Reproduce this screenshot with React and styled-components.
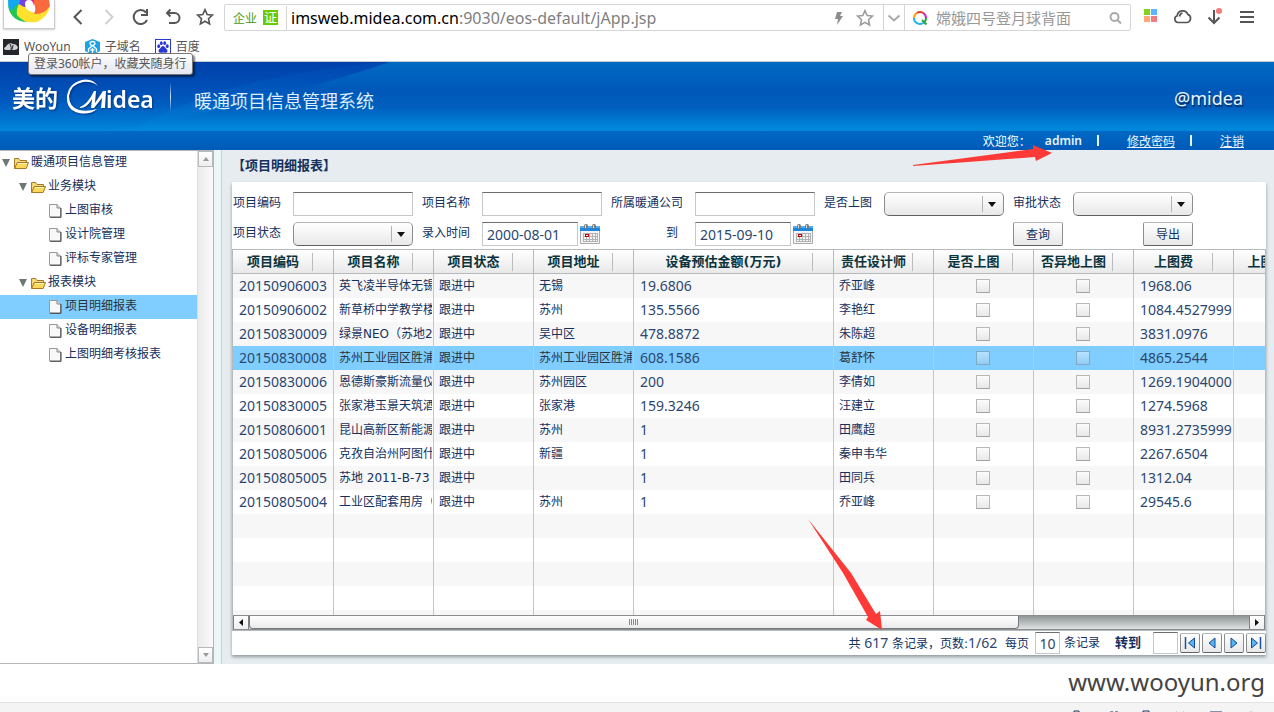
import React from "react";
import styled, { createGlobalStyle, css } from "styled-components";

const verdana = `"DejaVu Sans", "Noto Sans CJK SC", sans-serif`;
const yahei = `"Noto Sans", "Noto Sans CJK SC", sans-serif`;
const navy = "#15305c";
const selectedBlue = "#7fceff";
const red = "#fd3a37";

const GlobalStyle = createGlobalStyle`
  *, *::before, *::after { box-sizing: border-box; }
  body { margin: 0; background: #fff; font-family: ${verdana}; font-size: 12px; color: ${navy}; }
  button, input, select { font: inherit; color: inherit; margin: 0; padding: 0; }
  button { cursor: pointer; }
  ul { list-style: none; margin: 0; padding: 0; }
  svg { display: block; flex: none; }
`;

const Page = styled.div`
  position: relative;
  display: flex;
  flex-direction: column;
  height: 100vh;
  overflow: hidden;
`;

/* ---------- browser chrome ---------- */

const Chrome = styled.header`
  position: relative;
  flex: none;
  height: 62px;
  background: #fff;
  border-bottom: 1px solid #c4ccd0;
  font-family: ${yahei};
`;

const NavBar = styled.div`
  display: flex;
  align-items: flex-start;
  height: 36px;
  padding-left: 3px;
`;

const BrowserLogo = styled.div`
  width: 52px;
  height: 29px;
  border: 1px solid #ccc;
  border-top: 0;
  box-shadow: 0 1px 2px rgba(0, 0, 0, 0.2);
  overflow: hidden;
`;

const NavButtons = styled.div`
  display: flex;
  gap: 12px;
  padding: 7px 9px 0 12px;
`;

const IconButton = styled.button`
  display: flex;
  align-items: center;
  justify-content: center;
  width: 20px;
  height: 20px;
  border: 0;
  background: none;
  color: ${(p) => p.$color || "#555"};
`;

const AddressBar = styled.div`
  flex: 1;
  display: flex;
  align-items: center;
  height: 27px;
  margin-top: 4px;
  border: 1px solid #d6d6d6;
  border-radius: 2px;
`;

const Certificate = styled.div`
  display: flex;
  align-items: center;
  gap: 6px;
  height: 24px;
  padding: 0 8px;
  border-right: 1px solid #d6d6d6;
  font-size: 12px;
  color: #4a9a10;
`;

const CertBadge = styled.span`
  width: 15px;
  height: 15px;
  background: #66cc00;
  color: #fff;
  font-size: 13px;
  line-height: 15px;
  text-align: center;
`;

const Url = styled.div`
  flex: 1;
  padding-left: 4px;
  font-size: 16px;
  line-height: 22px;
  color: #808080;
  white-space: nowrap;
`;

const Host = styled.span`
  color: #000;
`;

const AddressTools = styled.div`
  display: flex;
  gap: 7px;
  padding-right: 8px;
`;

const DropToggle = styled.div`
  display: flex;
  align-items: center;
  height: 25px;
  border: 1px solid #d6d6d6;
  border-width: 0 1px;
`;

const SearchBox = styled.label`
  display: flex;
  align-items: center;
  gap: 8px;
  width: 225px;
  padding: 0 5px 0 7px;
`;

const SearchInput = styled.input`
  flex: 1;
  min-width: 0;
  border: 0;
  outline: 0;
  background: none;
  font-size: 15px;
  &::placeholder { color: #999; opacity: 1; }
`;

const Extensions = styled.div`
  display: flex;
  gap: 12px;
  padding: 7px 17px 0 10px;
`;

const Bookmarks = styled.nav`
  display: flex;
  align-items: center;
  gap: 14px;
  height: 22px;
  padding-left: 3px;
`;

const Bookmark = styled.a`
  display: flex;
  align-items: center;
  gap: 5px;
  font-size: 12px;
  line-height: 20px;
  color: #555;
  text-decoration: none;
`;

const Tooltip = styled.div`
  position: absolute;
  z-index: 2;
  left: 28px;
  top: 53px;
  padding: 0 5px;
  border: 1px solid #767676;
  border-radius: 3px;
  background: linear-gradient(#fff, #e4e5f0);
  box-shadow: 2px 2px 2px rgba(0, 0, 0, 0.5);
  font-size: 12px;
  line-height: 20px;
  color: #575757;
  white-space: nowrap;
`;

/* ---------- application banner ---------- */

const Banner = styled.div`
  position: relative;
  flex: none;
  display: flex;
  align-items: center;
  height: 69px;
  padding: 0 31px 0 12px;
  background: linear-gradient(#006ac2 0%, #0058b9 42%, #005fbe 66%, #0085da 94%, #0088dd 100%);
  color: #fff;
`;

const BannerArt = styled.svg`
  position: absolute;
  left: 0;
  top: 0;
`;

const Brand = styled.div`
  position: relative;
  display: flex;
  align-items: center;
  gap: 7px;
  padding-right: 16px;
  filter: drop-shadow(1px 1px 1px rgba(0, 30, 90, 0.6));
`;

const BrandName = styled.span`
  font: 700 23px/30px "Noto Sans CJK SC", sans-serif;
`;

const BrandRule = styled.span`
  position: relative;
  width: 1px;
  height: 30px;
  background: linear-gradient(rgba(255, 255, 255, 0), #cfe6ff 50%, rgba(255, 255, 255, 0));
`;

const SystemTitle = styled.h1`
  position: relative;
  flex: 1;
  margin: 0;
  padding: 6px 0 0 23px;
  font: 400 18px/26px "Noto Sans CJK SC", sans-serif;
  color: #dceeff;
`;

const AccountTag = styled.span`
  padding-top: 2px;
  font: 18px/26px ${yahei};
  color: #eef6ff;
  text-shadow: 1px 2px 1px rgba(0, 20, 60, 0.7);
`;

const UserBar = styled.div`
  flex: none;
  display: flex;
  align-items: center;
  justify-content: flex-end;
  height: 19px;
  padding-right: 30px;
  background: linear-gradient(#0069c4, #005ab8);
  color: #fff;
`;

const Welcome = styled.span`
  width: 62px;
`;

const UserName = styled.strong`
  font: 600 12px/18px "Noto Sans", sans-serif;
  color: #e8f3ff;
`;

const UserRule = styled.span`
  width: 2px;
  height: 11px;
  margin: 0 28px 0 15px;
  background: #e8f3ff;
`;

const UserLink = styled.a`
  color: #e8f3ff;
`;

/* ---------- workspace ---------- */

const Workspace = styled.div`
  flex: 1;
  display: flex;
  min-height: 0;
  background: #e6ecef;
`;

const Sidebar = styled.aside`
  flex: none;
  display: flex;
  width: 214px;
  border: 1px solid #b2b6b8;
  border-left: 0;
  background: #fff;
`;

const Tree = styled.ul`
  flex: 1;
`;

const TreeItem = styled.li`
  display: flex;
  align-items: center;
  height: 24px;
  padding-left: ${(p) => 2 + p.$depth * 17}px;
  background: ${(p) => (p.$selected ? selectedBlue : "none")};
  color: ${(p) => (p.$selected ? "#2b333c" : navy)};
  white-space: nowrap;
`;

const TreeLabel = styled.span`
  align-self: flex-start;
  line-height: 22px;
`;

const Twisty = styled.span`
  width: 12px;
`;

const NodeIcon = styled.span`
  display: flex;
  width: 17px;
  padding-left: ${(p) => (p.$leaf ? 1 : 0)}px;
`;

const VScroll = styled.div`
  display: flex;
  flex-direction: column;
  justify-content: space-between;
  width: 16px;
  border-left: 1px solid #ddd;
  background: linear-gradient(90deg, #ebebeb, #fafafa);
`;

const VScrollButton = styled.button`
  display: flex;
  align-items: center;
  justify-content: center;
  height: 16px;
  border: 1px solid #b7babc;
  background: linear-gradient(#fff, #eee);
`;

const Splitter = styled.div`
  flex: none;
  width: 8px;
  border-right: 1px solid #c5d3d8;
  background: #eaf6f8;
`;

const Content = styled.main`
  flex: 1;
  display: flex;
  flex-direction: column;
  min-width: 0;
  padding: 0 8px 9px 10px;
`;

const PanelTitle = styled.h2`
  flex: none;
  margin: 0;
  font: 700 13px/32px ${verdana};
`;

const Card = styled.section`
  flex: 1;
  display: flex;
  flex-direction: column;
  min-height: 0;
  background: #fff;
  box-shadow: 0 2px 3px rgba(90, 100, 105, 0.6);
`;

const Filters = styled.form`
  flex: none;
  display: grid;
  grid-template-columns: 51px 120px 51px 120px 75px 120px 51px 120px 51px 120px;
  grid-auto-rows: 24px;
  gap: 6px 9px;
  padding: 10px 0 3px 1px;
`;

const FieldLabel = styled.label`
  line-height: 22px;
  white-space: nowrap;
  text-align: ${(p) => p.$align || "left"};
  padding: 0 ${(p) => (p.$align ? 8 : 0)}px;
`;

const insetField = css`
  border: 1px solid #c4c8ca;
  border-top-color: #6c6f70;
  background: #fff;
  outline: 0;
  border-radius: 0;
  font: 14px ${yahei};
  color: #2c4670;
`;

const TextInput = styled.input`
  ${insetField}
  width: ${(p) => p.$width || "100%"};
  height: 24px;
  padding: 0 4px;
`;

const raised = css`
  border: 1px solid #8b8e90;
  border-top-color: #b3b6b8;
  border-bottom-color: #5f6263;
  background: linear-gradient(#fff, #e8e8e8);
`;

const SelectWrap = styled.span`
  position: relative;
  display: block;
  &::after {
    content: "";
    position: absolute;
    right: 8px;
    top: 10px;
    border: 4px solid transparent;
    border-top: 5px solid #111;
    border-bottom: 0;
    pointer-events: none;
  }
`;

const Select = styled.select`
  ${raised}
  appearance: none;
  width: 100%;
  height: 24px;
  border-radius: 5px;
  background: linear-gradient(#b0b3b5, #b0b3b5) right 20px center / 1px 16px no-repeat,
    linear-gradient(#fff, #e8e8e8);
`;

const DateField = styled.span`
  display: flex;
  gap: 1px;
`;

const CalendarButton = styled.button`
  display: flex;
  align-items: center;
  justify-content: center;
  width: 22px;
  height: 24px;
  border: 0;
  background: none;
`;

const ActionButton = styled.button`
  ${raised}
  width: 50px;
  height: 24px;
  padding-bottom: 2px;
  border-radius: 2px;
  justify-self: ${(p) => p.$side};
`;

/* ---------- data grid ---------- */

const GridFrame = styled.div`
  flex: 1;
  display: flex;
  flex-direction: column;
  min-height: 0;
  border: 1px solid #b7babc;
`;

const GridView = styled.div`
  flex: 1;
  min-height: 0;
  overflow: hidden;
`;

const Table = styled.table`
  width: 1101px;
  table-layout: fixed;
  border-collapse: separate;
  border-spacing: 0;
`;

const HeadCell = styled.th`
  height: 24px;
  padding: 0;
  border-right: 1px solid #b7babc;
  border-bottom: 1px solid #b7babc;
  background: linear-gradient(#b9bcbe, #b9bcbe) right 20px center / 1px 18px no-repeat,
    linear-gradient(#fff, #e9e9e9);
  font-size: 13px;
  line-height: 22px;
  color: #0b333c;
  white-space: nowrap;
`;

const HeadLabel = styled.div`
  margin-right: 20px;
  text-align: center;
`;

const Row = styled.tr`
  background: ${(p) => (p.$selected ? selectedBlue : "#fff")};
  color: ${(p) => (p.$selected ? "#2b333c" : navy)};
  &:nth-child(odd) { background: ${(p) => (p.$selected ? selectedBlue : "#f7f7f7")}; }
`;

const Cell = styled.td`
  height: 24px;
  padding: 0 1px 0 5px;
  border-right: 1px solid #c4c6c8;
`;

const NumberCell = styled(Cell)`
  padding: 0 0 0 6px;
  font: 14px ${yahei};
  color: #2c4670;
`;

const CheckCell = styled(Cell)`
  padding: 0 1px 0 0;
`;

const CellText = styled.div`
  overflow: hidden;
  line-height: 24px;
  height: 24px;
  white-space: nowrap;
`;

const Check = styled.input`
  appearance: none;
  display: block;
  width: 14px;
  height: 14px;
  margin: 0 auto;
  border: 1px solid #b8b8b8;
  border-bottom-color: #a2a2a2;
  background: ${(p) => (p.$selected ? "linear-gradient(#b8e2ff, #93cdf3)" : "linear-gradient(#fcfcfc, #e8e8e8)")};
  ${(p) => p.$selected && "border-color: #7fa9c4;"}
`;

const HScroll = styled.div`
  flex: none;
  display: flex;
  height: 15px;
  border: 1px solid #8a8d8f;
  border-width: 1px 0;
  background: linear-gradient(#8f9495, #dfe3e3);
`;

const HScrollButton = styled.button`
  display: flex;
  align-items: center;
  justify-content: center;
  width: 16px;
  border: 1px solid #808385;
  border-width: 0 1px;
  background: linear-gradient(#fff, #eee);
`;

const HTrack = styled.div`
  flex: 1;
  display: flex;
`;

const HThumb = styled.div`
  display: flex;
  align-items: center;
  justify-content: center;
  width: 77%;
  border: 1px solid #777a7c;
  border-top: 0;
  border-radius: 0 0 4px 4px;
  background: linear-gradient(#fff, #eaeaea);
`;

const Pager = styled.div`
  flex: none;
  display: flex;
  align-items: center;
  justify-content: flex-end;
  height: 24px;
  line-height: 22px;
  white-space: nowrap;
`;

const PagerGroup = styled.label`
  display: flex;
  align-items: center;
  gap: ${(p) => p.$gap}px;
  margin-right: ${(p) => p.$after}px;
`;

const Figure = styled.span`
  font: 14px/22px ${yahei};
  color: #2c4670;
`;

const GoTo = styled.strong`
  font-size: 13px;
`;

const PageInput = styled.input`
  ${insetField}
  width: 25px;
  height: 22px;
  text-align: center;
`;

const PagerButtons = styled.div`
  display: flex;
  gap: 2px;
`;

const PagerButton = styled.button`
  ${raised}
  display: flex;
  align-items: center;
  justify-content: center;
  width: 20px;
  height: 20px;
  border-radius: 2px;
`;

/* ---------- footer ---------- */

const Watermark = styled.div`
  flex: none;
  height: 38px;
  padding-right: 9px;
  font: 24px/36px ${yahei};
  color: #444;
  text-align: right;
`;

const StatusBar = styled.footer`
  flex: none;
  display: flex;
  justify-content: flex-end;
  gap: 19px;
  height: 10px;
  padding: 6px 15px 0 0;
  overflow: hidden;
  border-top: 1px solid #e2e2e2;
  background: #f4f4f4;
`;

const Arrow = styled.svg`
  position: absolute;
  z-index: 3;
  pointer-events: none;
  right: ${(p) => p.$right}px;
  ${(p) => (p.$top !== undefined ? `top: ${p.$top}px;` : `bottom: ${p.$bottom}px;`)}
`;

/* ---------- icons ---------- */

const Stroke = ({ d, size = 20, width = 2, fill = "none" }) => (
  <svg width={size} height={size} viewBox={`0 0 ${size} ${size}`} fill={fill} stroke="currentColor" strokeWidth={width}>
    <path d={d} />
  </svg>
);

const starPath = "M10 2.6l2.2 4.9 5.2.6-3.9 3.6 1.1 5.3-4.6-2.7-4.6 2.7 1.1-5.3-3.9-3.6 5.2-.6z";

const PinwheelLogo = () => (
  <svg width="50" height="28" viewBox="4 0 50 28">
    <path d="M8 0Q7 12 17 19Q14 9 21 2V0z" fill="#12a9f2" />
    <path d="M8 5Q10 20 25 22Q17 15 19 4L14 7Q15 12 17 17Q11 13 8 5z" fill="#23c552" />
    <path d="M10 10Q14 20 27 22Q18 16 17 8z" fill="#23c552" />
    <path d="M17 15Q24 24 37 22Q49 16 50 5Q46 13 37 13Q28 13 24 5L19 4Q16 9 17 15z" fill="#ffe02c" />
    <path d="M33 2Q37 8 34 14Q44 15 50 6L49 0H34z" fill="#fb6a3c" />
    <path d="M20 0H34L33 5L24 7L19 4z" fill="#7a3fe0" />
    <path d="M34 0H28L33 6z" fill="#e21ca8" />
    <circle cx="29" cy="4" r="4" fill="#fff" />
  </svg>
);

const WooyunIcon = () => (
  <svg width="16" height="16" viewBox="0 0 16 16">
    <rect width="16" height="16" fill="#25262b" />
    <path d="M1 9q2-1 3-3 3-3 6-1 4 0 5 4-1 2-4 2H4Q1 11 1 9z" fill="#cfd1d4" />
    <path d="M7 5q2 3 1 7M10 6q0 3-2 6" stroke="#25262b" fill="none" />
  </svg>
);

const DomainIcon = () => (
  <svg width="15" height="16" viewBox="0 0 15 16">
    <path d="M7.500 0L15 3v9l-7.500 4L0 12V3z" fill="#1aa3e8" />
    <path d="M5 3.500q2.500-2 5 0M5 3.500q0 3 2.500 3T10 3.500M7.500 6.500L3.500 10v3M7.500 6.500l4 3.500v3M5.500 11h4M7.500 9v5" stroke="#fff" strokeWidth="1.300" fill="none" />
  </svg>
);

const PawIcon = () => (
  <svg width="16" height="16" viewBox="0 0 16 16">
    <rect x=".5" y=".5" width="15" height="15" fill="#fff" stroke="#2b36d9" />
    <g fill="#2b36d9">
      <ellipse cx="3.700" cy="7.200" rx="1.400" ry="1.900" />
      <ellipse cx="6.300" cy="4.200" rx="1.400" ry="1.900" />
      <ellipse cx="9.700" cy="4.200" rx="1.400" ry="1.900" />
      <ellipse cx="12.300" cy="7.200" rx="1.400" ry="1.900" />
      <path d="M8 7q1.500 0 2.500 2 2.500 1.500 2 3.500t-4.500 1q-4 1-4.500-1t2-3.500Q6.500 7 8 7z" />
    </g>
  </svg>
);

const FolderIcon = () => (
  <svg width="15" height="13" viewBox="0 0 15 13">
    <path d="M.5 11.500V1.500h4l1.500 2h6.500V6" fill="#f5d97a" stroke="#a8782a" />
    <path d="M.7 11.500L3.200 5.500h11.300l-2.300 6z" fill="#fbd85a" stroke="#a8782a" />
    <path d="M4 6.500h9" stroke="#fff3bd" />
  </svg>
);

const FileIcon = () => (
  <svg width="13" height="14" viewBox="0 0 13 14">
    <path d="M.5.5h7.500l3.500 3.500v9H.5z" fill="#f8f8f8" stroke="#999" />
    <path d="M8 .5V4h3.500" fill="#ddd" stroke="#888" />
    <path d="M1 13.300h11V4" fill="none" stroke="#444" />
  </svg>
);

const CalendarIcon = () => (
  <svg width="22" height="22" viewBox="0 0 22 22">
    <rect x="1" y="3" width="20" height="18" rx="1" fill="#a9abad" />
    <rect x="2" y="8" width="18" height="12" fill="#f4f4f4" />
    <rect x="1" y="3" width="20" height="5" fill="#1b86e0" />
    <rect x="1" y="3" width="20" height="2" fill="#4fb0f5" />
    <path d="M4 10.500h15M4 13.500h15M4 16.500h15M4 18.500h15M4.500 10v9M7.500 10v9M10.500 10v9M13.500 10v9M16.500 10v9M18.500 10v9" stroke="#b0b2b4" />
    <rect x="6.500" y="11.500" width="3" height="2" fill="#fff" stroke="#c80000" />
    <rect x="5" y="1" width="4" height="5" rx="2" fill="#777" />
    <rect x="13" y="1" width="4" height="5" rx="2" fill="#777" />
    <path d="M6.500 2v3M14.500 2v3" stroke="#ddd" />
  </svg>
);

const Triangle = ({ dir, color = "#111", w = 7, h = 4 }) => {
  const paths = {
    down: `M0 0H${w}L${w / 2} ${h}z`,
    up: `M0 ${h}H${w}L${w / 2} 0z`,
    left: `M${w} 0V${h}L0 ${h / 2}z`,
    right: `M0 0V${h}L${w} ${h / 2}z`,
  };
  return (
    <svg width={w} height={h}>
      <path d={paths[dir]} fill={color} />
    </svg>
  );
};

const PagerIcon = ({ back, edge }) => (
  <svg width="12" height="12" viewBox="0 0 12 12">
    <g transform={back ? undefined : "matrix(-1 0 0 1 12 0)"}>
      <path d={edge ? "M10.500 1v10L4.500 6z" : "M9 1v10L3 6z"} fill="#55b4f5" stroke="#164a92" />
      {edge && <path d="M1.500 0v12" stroke="#1d4f9c" strokeWidth="1.500" />}
    </g>
  </svg>
);

const MideaMark = () => (
  <svg width="89" height="38" viewBox="0 0 89 38" fill="#fff">
    <path d="M33 8Q27 0 17 2Q4 5 2 18Q1 32 14 35Q25 37 32 31Q22 34 14 32Q4 29 4 18Q6 6 18 4Q27 3 33 8z" />
    <path d="M15 29Q23 26 29 13L31 13L30 25L38 13H41L40 30H36L37 20L29 30H26L27 21Q22 30 15 30z" />
    <text x="41" y="30" fontFamily="Noto Sans, sans-serif" fontWeight="600" fontSize="23">idea</text>
  </svg>
);

/* ---------- data ---------- */

const tree = [
  [0, "暖通项目信息管理"],
  [1, "业务模块"],
  [2, "上图审核"],
  [2, "设计院管理"],
  [2, "评标专家管理"],
  [1, "报表模块"],
  [2, "项目明细报表", true],
  [2, "设备明细报表"],
  [2, "上图明细考核报表"],
];

const columns = [
  ["项目编码", 101],
  ["项目名称", 100],
  ["项目状态", 100],
  ["项目地址", 100],
  ["设备预估金额(万元)", 200],
  ["责任设计师", 100],
  ["是否上图", 100],
  ["否异地上图", 100],
  ["上图费", 100],
  ["上图面积", 100],
];

const rows = [
  ["20150906003", "英飞凌半导体无锡", "无锡", "19.6806", "乔亚峰", "1968.06"],
  ["20150906002", "新草桥中学教学楼", "苏州", "135.5566", "李艳红", "1084.4527999"],
  ["20150830009", "绿景NEO（苏地2", "吴中区", "478.8872", "朱陈超", "3831.0976"],
  ["20150830008", "苏州工业园区胜浦", "苏州工业园区胜浦", "608.1586", "葛舒怀", "4865.2544"],
  ["20150830006", "恩德斯豪斯流量仪", "苏州园区", "200", "李倩如", "1269.1904000"],
  ["20150830005", "张家港玉景天筑酒", "张家港", "159.3246", "汪建立", "1274.5968"],
  ["20150806001", "昆山高新区新能源", "苏州", "1", "田鹰超", "8931.2735999"],
  ["20150805006", "克孜自治州阿图什", "新疆", "1", "秦申韦华", "2267.6504"],
  ["20150805005", "苏地 2011-B-73", "", "1", "田同兵", "1312.04"],
  ["20150805004", "工业区配套用房（", "苏州", "1", "乔亚峰", "29545.6"],
];
const selectedId = "20150830008";
const emptyRows = [0, 1, 2, 3, 4];

/* ---------- sections ---------- */

const BrowserChrome = () => (
  <Chrome>
    <NavBar>
      <BrowserLogo><PinwheelLogo /></BrowserLogo>
      <NavButtons>
        <IconButton aria-label="后退"><Stroke d="M14.500 3L7.500 10l7 7" /></IconButton>
        <IconButton aria-label="前进" $color="#d0d0d0"><Stroke d="M6.500 3l7 7-7 7" /></IconButton>
        <IconButton aria-label="刷新"><Stroke d="M15 5.500A7 7 0 1 0 16 13M16 2v6h-6" /></IconButton>
        <IconButton aria-label="恢复"><Stroke d="M7.500 2.500L4 6l3.500 3.500M4 6h7.500a5 5 0 0 1 0 10H6" /></IconButton>
        <IconButton aria-label="收藏"><Stroke d={starPath} width={1.6} /></IconButton>
      </NavButtons>
      <AddressBar>
        <Certificate>企业<CertBadge>证</CertBadge></Certificate>
        <Url><Host>imsweb.midea.com.cn</Host>:9030/eos-default/jApp.jsp</Url>
        <AddressTools>
          <IconButton aria-label="极速模式" $color="#8c8c8c">
            <svg width="20" height="20"><path d="M9 4h5l-2 4h3l-6 9 1-6H7z" fill="currentColor" /></svg>
          </IconButton>
          <IconButton aria-label="收藏此页" $color="#999"><Stroke d={starPath} width={1.5} /></IconButton>
        </AddressTools>
        <DropToggle>
          <IconButton aria-label="展开" $color="#aaa"><Stroke d="M4.500 7.500l5.500 5 5.500-5" /></IconButton>
        </DropToggle>
        <SearchBox>
          <svg width="16" height="16" viewBox="0 0 16 16" fill="none" strokeWidth="2">
            <path d="M2 8a6 6 0 0 1 3-5.200" stroke="#f7a21b" />
            <path d="M5 2.800a6 6 0 0 1 6 0" stroke="#e8382c" />
            <path d="M11 2.800A6 6 0 0 1 14 8" stroke="#c629c9" />
            <path d="M14 8a6 6 0 0 1-3 5.200M10 10l4.500 4.500" stroke="#28a745" />
            <path d="M11 13.200A6 6 0 0 1 2 8" stroke="#27b4e8" />
          </svg>
          <SearchInput aria-label="搜索" placeholder="嫦娥四号登月球背面" />
          <IconButton as="span" $color="#aaa"><Stroke d="M13.500 9a4 4 0 1 0-8 0 4 4 0 0 0 8 0M12.500 12l3.500 3.500" /></IconButton>
        </SearchBox>
      </AddressBar>
      <Extensions>
        <IconButton aria-label="扩展">
          <svg width="20" height="20">
            <path d="M3 2h6v6H3z" fill="#7fd41f" /><path d="M10 2h6v6h-6z" fill="#5fb4ff" />
            <path d="M3 9h6v6H3z" fill="#ffa876" /><path d="M10 9h6v6h-6z" fill="#f27a80" />
          </svg>
        </IconButton>
        <IconButton aria-label="云"><Stroke d="M5 15.500a3.500 3.500 0 0 1-.8-6.800 5.500 5.500 0 0 1 10.600-1.300A4.200 4.200 0 0 1 14 15.500zM6.500 9.500q.5-3 3-3.500" width={1.7} /></IconButton>
        <IconButton aria-label="下载">
          <svg width="20" height="20" fill="none" stroke="#555" strokeWidth="2">
            <path d="M9 3v13M3.500 10.500L9 16l5.500-5.500" /><circle cx="14" cy="4" r="3" fill="#f57a7a" stroke="none" />
          </svg>
        </IconButton>
        <IconButton aria-label="菜单"><Stroke d="M3 5h14M3 10h14M3 15h14" /></IconButton>
      </Extensions>
    </NavBar>
    <Bookmarks>
      <Bookmark href="#wooyun"><WooyunIcon />WooYun</Bookmark>
      <Bookmark href="#domains"><DomainIcon />子域名</Bookmark>
      <Bookmark href="#baidu"><PawIcon />百度</Bookmark>
    </Bookmarks>
    <Tooltip role="tooltip">登录360帐户，收藏夹随身行</Tooltip>
  </Chrome>
);

const AppBanner = () => (
  <>
    <Banner>
      <BannerArt width="400" height="69" viewBox="0 0 400 69" aria-hidden="true">
        <defs>
          <linearGradient id="deep" x1="0" y1="0" x2="0" y2="1">
            <stop offset="0" stopColor="#0046b0" />
            <stop offset=".5" stopColor="#005bbf" />
            <stop offset="1" stopColor="#0087dc" />
          </linearGradient>
          <linearGradient id="dusk" x1="0" y1="0" x2="0" y2="1">
            <stop offset="0" stopColor="#003ea8" stopOpacity=".6" />
            <stop offset="1" stopColor="#0050b8" stopOpacity="0" />
          </linearGradient>
        </defs>
        <path d="M0 0H390Q240 50 100 69H0z" fill="url(#deep)" />
        <path d="M0 0H390Q300 6 220 30Q160 50 130 69H0z" fill="url(#dusk)" />
      </BannerArt>
      <Brand><BrandName>美的</BrandName><MideaMark /></Brand>
      <BrandRule />
      <SystemTitle>暖通项目信息管理系统</SystemTitle>
      <AccountTag>@midea</AccountTag>
    </Banner>
    <UserBar>
      <Welcome>欢迎您：</Welcome>
      <UserName>admin</UserName>
      <UserRule />
      <UserLink href="#password">修改密码</UserLink>
      <UserRule />
      <UserLink href="#logout">注销</UserLink>
    </UserBar>
  </>
);

const ModuleTree = () => (
  <Sidebar>
    <Tree>
      {tree.map(([depth, label, selected]) => (
        <TreeItem key={label} $depth={depth} $selected={selected}>
          <Twisty>{depth < 2 && <Triangle dir="down" color="#6f7777" w={8} h={8} />}</Twisty>
          <NodeIcon $leaf={depth === 2}>{depth < 2 ? <FolderIcon /> : <FileIcon />}</NodeIcon>
          <TreeLabel>{label}</TreeLabel>
        </TreeItem>
      ))}
    </Tree>
    <VScroll>
      <VScrollButton aria-label="向上"><Triangle dir="up" color="#999" w={6} /></VScrollButton>
      <VScrollButton aria-label="向下"><Triangle dir="down" color="#999" w={6} /></VScrollButton>
    </VScroll>
  </Sidebar>
);

const Combo = ({ id }) => (
  <SelectWrap><Select id={id}><option value="" /></Select></SelectWrap>
);

const DatePick = ({ id, value }) => (
  <DateField>
    <TextInput id={id} $width="96px" defaultValue={value} />
    <CalendarButton type="button" aria-label="选择日期"><CalendarIcon /></CalendarButton>
  </DateField>
);

const FilterForm = () => (
  <Filters onSubmit={(e) => e.preventDefault()}>
    <FieldLabel htmlFor="code">项目编码</FieldLabel>
    <TextInput id="code" />
    <FieldLabel htmlFor="name">项目名称</FieldLabel>
    <TextInput id="name" />
    <FieldLabel htmlFor="company">所属暖通公司</FieldLabel>
    <TextInput id="company" />
    <FieldLabel htmlFor="drawn">是否上图</FieldLabel>
    <Combo id="drawn" />
    <FieldLabel htmlFor="approval">审批状态</FieldLabel>
    <Combo id="approval" />
    <FieldLabel htmlFor="status">项目状态</FieldLabel>
    <Combo id="status" />
    <FieldLabel htmlFor="from">录入时间</FieldLabel>
    <DatePick id="from" value="2000-08-01" />
    <FieldLabel htmlFor="to" $align="right">到</FieldLabel>
    <DatePick id="to" value="2015-09-10" />
    <span />
    <span />
    <ActionButton $side="start">查询</ActionButton>
    <ActionButton $side="end">导出</ActionButton>
  </Filters>
);

const ReportTable = () => (
  <GridFrame>
    <GridView>
      <Table>
        <colgroup>{columns.map(([name, width]) => <col key={name} width={width} />)}</colgroup>
        <thead>
          <tr>{columns.map(([name]) => <HeadCell key={name}><HeadLabel>{name}</HeadLabel></HeadCell>)}</tr>
        </thead>
        <tbody>
          {rows.map(([id, name, address, amount, designer, fee]) => {
            const selected = id === selectedId;
            return (
              <Row key={id} $selected={selected}>
                <NumberCell><CellText>{id}</CellText></NumberCell>
                <Cell><CellText>{name}</CellText></Cell>
                <Cell><CellText>跟进中</CellText></Cell>
                <Cell><CellText>{address}</CellText></Cell>
                <NumberCell><CellText>{amount}</CellText></NumberCell>
                <Cell><CellText>{designer}</CellText></Cell>
                <CheckCell><Check type="checkbox" aria-label={`${id} 是否上图`} $selected={selected} /></CheckCell>
                <CheckCell><Check type="checkbox" aria-label={`${id} 否异地上图`} $selected={selected} /></CheckCell>
                <NumberCell><CellText>{fee}</CellText></NumberCell>
                <Cell />
              </Row>
            );
          })}
          {emptyRows.map((n) => (
            <Row key={n}>{columns.map(([name]) => <Cell key={name} />)}</Row>
          ))}
        </tbody>
      </Table>
    </GridView>
    <HScroll>
      <HScrollButton aria-label="向左"><Triangle dir="left" w={4} h={7} /></HScrollButton>
      <HTrack>
        <HThumb>
          <svg width="10" height="6"><path d="M.5 0v6M2.500 0v6M4.500 0v6M6.500 0v6M8.500 0v6" stroke="#888" /></svg>
        </HThumb>
      </HTrack>
      <HScrollButton aria-label="向右"><Triangle dir="right" w={4} h={7} /></HScrollButton>
    </HScroll>
  </GridFrame>
);

const ReportPager = () => (
  <Pager>
    <PagerGroup $gap={6} $after={4}>
      <span>共 <Figure>617</Figure> 条记录，页数:<Figure>1/62</Figure>&nbsp; 每页</span>
      <PageInput defaultValue="10" />
    </PagerGroup>
    <PagerGroup as="span" $gap={0} $after={15}>条记录</PagerGroup>
    <PagerGroup $gap={12} $after={2}>
      <GoTo>转到</GoTo>
      <PageInput />
    </PagerGroup>
    <PagerButtons>
      <PagerButton aria-label="首页"><PagerIcon back edge /></PagerButton>
      <PagerButton aria-label="上一页"><PagerIcon back /></PagerButton>
      <PagerButton aria-label="下一页"><PagerIcon /></PagerButton>
      <PagerButton aria-label="末页"><PagerIcon edge /></PagerButton>
    </PagerButtons>
  </Pager>
);

export default function App() {
  return (
    <Page>
      <GlobalStyle />
      <BrowserChrome />
      <AppBanner />
      <Workspace>
        <ModuleTree />
        <Splitter />
        <Content>
          <PanelTitle>【项目明细报表】</PanelTitle>
          <Card>
            <FilterForm />
            <ReportTable />
            <ReportPager />
          </Card>
        </Content>
      </Workspace>
      <Watermark>www.wooyun.org</Watermark>
      <StatusBar>
        {["M6 8V2h5v6", "M4 8l3-5h3M9 8l3-5h3", "M5 8V2h6v6", "M3 3l3 2M10 3l3 2", "M2 3h12M8 3v5", "M5 5l3-2 3 2"].map((d) => (
          <Stroke key={d} d={d} size={16} width={1} />
        ))}
      </StatusBar>
      <Arrow $right={222} $top={145} width="139" height="21" viewBox="0 0 139 21">
        <path d="M0 20L120 4V0L139 8L123 16L122 12L0 21z" fill={red} />
      </Arrow>
      <Arrow $right={391} $bottom={82} width="75" height="111" viewBox="0 0 75 111">
        <path d="M0 0L43 54L68 95L72 92L74 111L58 101L60 98L35 54z" fill={red} />
      </Arrow>
    </Page>
  );
}
